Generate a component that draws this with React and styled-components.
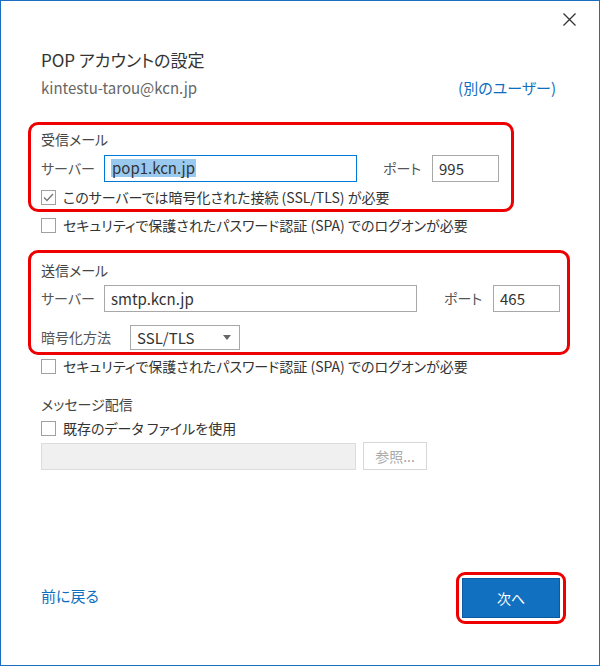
import React from 'react'
import styled, { createGlobalStyle, css } from 'styled-components'

const FONT = `"Noto Sans CJK JP", "Noto Sans", sans-serif`
const BLUE = '#106ebe'
const RED = '#ee0000'

const GlobalStyle = createGlobalStyle`
  html, body {
    margin: 0;
    padding: 0;
    background: #fff;
  }
  body {
    font-family: ${FONT};
    font-feature-settings: "palt";
  }
`

const Dialog = styled.div`
  box-sizing: border-box;
  width: 600px;
  height: 666px;
  border: 1px solid #1a6fc4;
  background: #fff;
  display: flex;
  flex-direction: column;
  padding: 0 40px;
  color: #333;
  font-size: 14px;
`

const TopBar = styled.div`
  height: 36px;
  display: flex;
  justify-content: flex-end;
  align-items: center;
  margin-right: -18px;
`

const CloseButton = styled.button`
  border: 0;
  background: none;
  padding: 0;
  width: 16px;
  height: 16px;
  display: flex;
  align-items: center;
  justify-content: center;
  cursor: pointer;
`

const Title = styled.h1`
  margin: 11px 0 0;
  font-size: 17px;
  font-weight: 400;
  line-height: 24px;
  color: #333;
`

const AccountRow = styled.div`
  display: flex;
  justify-content: space-between;
  align-items: center;
  height: 22px;
  margin-top: 4px;
  margin-right: 3px;
  font-size: 15px;
`

const Email = styled.span`
  color: #666;
`

const Link = styled.a`
  color: ${BLUE};
  text-decoration: none;
  font-size: 15px;
  cursor: pointer;
  margin-bottom: ${({ $mb }) => $mb || 0}px;
`

const Highlight = styled.section`
  box-sizing: border-box;
  width: ${({ $w }) => $w}px;
  margin-left: -13px;
  border: 3px solid ${RED};
  border-radius: 10px;
  padding: ${({ $pt }) => $pt}px 10px 2px;
  margin-top: ${({ $mt }) => $mt}px;
`

const SectionLabel = styled.div`
  height: 20px;
  line-height: 20px;
  color: #444;
  font-size: 14px;
  margin-top: ${({ $mt }) => $mt || 0}px;
`

const FieldRow = styled.div`
  display: flex;
  align-items: center;
  height: ${({ $h }) => $h || 28}px;
  margin-top: ${({ $mt }) => $mt || 0}px;
`

const FieldLabel = styled.label`
  width: ${({ $w }) => $w}px;
  margin-left: ${({ $ml }) => $ml || 0}px;
  flex: none;
  color: #555;
  font-size: 14px;
`

const inputBase = css`
  box-sizing: border-box;
  height: 27px;
  border: 1px solid #a8a8a8;
  background: #fff;
  display: flex;
  align-items: center;
  padding: 0 6px;
  font-size: 15px;
  color: #333;
  flex: none;
`

const TextBox = styled.div`
  ${inputBase};
  width: ${({ $w }) => $w}px;
  ${({ $focused }) => $focused && css`border-color: #0078d7;`}
  ${({ $disabled }) => $disabled && css`
    background: #f0f0f0;
    border-color: #dcdcdc;
  `}
`

const Selected = styled.span`
  background: #99c9ef;
  line-height: 18px;
  padding: 0 1px;
`

const Select = styled.div`
  ${inputBase};
  width: 110px;
  height: 25px;
  justify-content: space-between;
  padding: 0 8px 0 6px;
`

const Caret = styled.span`
  width: 0;
  height: 0;
  border-left: 4px solid transparent;
  border-right: 4px solid transparent;
  border-top: 5px solid #666;
`

const CheckRow = styled.label`
  display: flex;
  align-items: center;
  height: 20px;
  gap: 7px;
  margin-top: ${({ $mt }) => $mt || 0}px;
  color: #333;
  font-size: 14px;
`

const Box = styled.span`
  box-sizing: border-box;
  width: 15px;
  height: 15px;
  border: 1px solid #a0a0a0;
  background: #fff;
  display: flex;
  align-items: center;
  justify-content: center;
  flex: none;
`

const BrowseButton = styled.button`
  box-sizing: border-box;
  margin-left: 7px;
  width: 64px;
  height: 28px;
  border: 1px solid #d8d8d8;
  background: #fff;
  color: #aaa;
  font-family: ${FONT};
  font-size: 14px;
  padding: 0;
`

const Footer = styled.div`
  margin-top: auto;
  margin-right: -7px;
  margin-bottom: 41px;
  display: flex;
  justify-content: space-between;
  align-items: center;
`

const ButtonRing = styled.div`
  border: 3px solid ${RED};
  border-radius: 9px;
  padding: 3px;
`

const PrimaryButton = styled.button`
  box-sizing: border-box;
  width: 98px;
  height: 40px;
  border: 1px solid #0b5aa0;
  background: #1170c0;
  color: #fff;
  font-family: ${FONT};
  font-size: 14px;
  display: block;
`

function Checkbox({ checked, children, mt }) {
  return (
    <CheckRow $mt={mt}>
      <Box>
        {checked && (
          <svg width="11" height="9" viewBox="0 0 11 9">
            <path d="M1 4.5 L4 7.5 L10 1" fill="none" stroke="#777" strokeWidth="1.4" />
          </svg>
        )}
      </Box>
      <span>{children}</span>
    </CheckRow>
  )
}

export default function App() {
  return (
    <>
      <GlobalStyle />
      <Dialog>
        <TopBar>
          <CloseButton aria-label="閉じる">
            <svg width="13" height="13" viewBox="0 0 13 13">
              <path d="M0.5 0.5 L12.5 12.5 M12.5 0.5 L0.5 12.5" stroke="#333" strokeWidth="1.3" />
            </svg>
          </CloseButton>
        </TopBar>

        <Title>POP アカウントの設定</Title>
        <AccountRow>
          <Email>kintestu-tarou@kcn.jp</Email>
          <Link>(別のユーザー)</Link>
        </AccountRow>

        <Highlight $w={486} $mt={24} $pt={4}>
          <SectionLabel>受信メール</SectionLabel>
          <FieldRow $mt={5}>
            <FieldLabel $w={63}>サーバー</FieldLabel>
            <TextBox $w={253} $focused>
              <Selected>pop1.kcn.jp</Selected>
            </TextBox>
            <FieldLabel $w={49} $ml={26}>ポート</FieldLabel>
            <TextBox $w={67}>995</TextBox>
          </FieldRow>
          <Checkbox checked mt={5}>このサーバーでは暗号化された接続 (SSL/TLS) が必要</Checkbox>
        </Highlight>
        <Checkbox mt={3}>セキュリティで保護されたパスワード認証 (SPA) でのログオンが必要</Checkbox>

        <Highlight $w={542} $mt={15} $pt={7}>
          <SectionLabel>送信メール</SectionLabel>
          <FieldRow $mt={4}>
            <FieldLabel $w={63}>サーバー</FieldLabel>
            <TextBox $w={313}>smtp.kcn.jp</TextBox>
            <FieldLabel $w={49} $ml={27}>ポート</FieldLabel>
            <TextBox $w={67}>465</TextBox>
          </FieldRow>
          <FieldRow $mt={12} $h={26}>
            <FieldLabel $w={89}>暗号化方法</FieldLabel>
            <Select>
              <span>SSL/TLS</span>
              <Caret />
            </Select>
          </FieldRow>
        </Highlight>
        <Checkbox mt={1}>セキュリティで保護されたパスワード認証 (SPA) でのログオンが必要</Checkbox>

        <SectionLabel $mt={18}>メッセージ配信</SectionLabel>
        <Checkbox mt={4}>既存のデータ ファイルを使用</Checkbox>
        <FieldRow $mt={4}>
          <TextBox $w={315} $disabled />
          <BrowseButton disabled>参照...</BrowseButton>
        </FieldRow>

        <Footer>
          <Link $mb={5}>前に戻る</Link>
          <ButtonRing>
            <PrimaryButton>次へ</PrimaryButton>
          </ButtonRing>
        </Footer>
      </Dialog>
    </>
  )
}
